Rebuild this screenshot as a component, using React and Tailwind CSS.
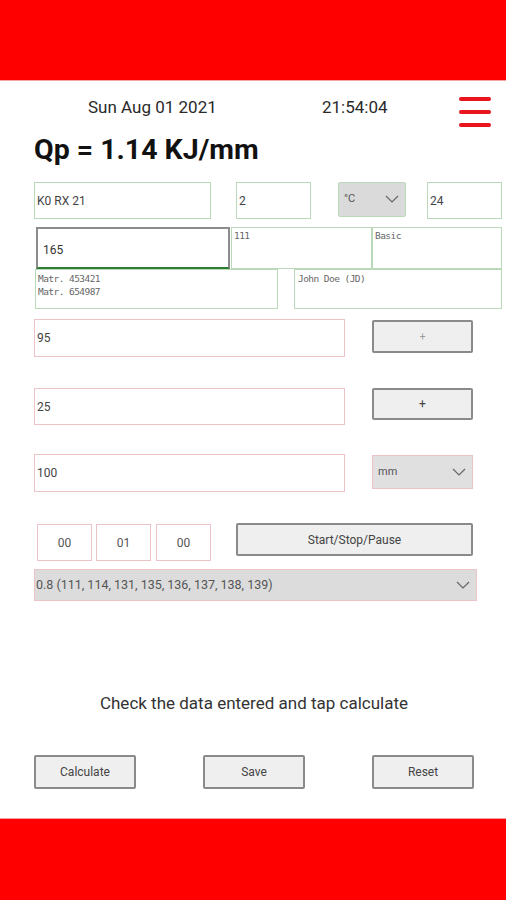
import React from "react";

const Chevron = ({ className = "" }) => (
  <svg width="14" height="8" viewBox="0 0 14 8" className={className}>
    <path d="M1 1 L7 7 L13 1" fill="none" stroke="#666" strokeWidth="1.2" />
  </svg>
);

export default function App() {
  const sans = { fontFamily: "Roboto, 'Liberation Sans', sans-serif" };
  const mono = { fontFamily: "'DejaVu Sans Mono', 'Liberation Mono', monospace", letterSpacing: "-0.55px" };
  const greenBox = "border border-[#b9d9b9] bg-white";
  const pinkBox = "border border-[#ecc3c6] bg-white";
  const btn = "border-2 border-[#8a8a8a] bg-[#efefef] rounded-[2px] flex items-center justify-center text-[12px] text-[#444]";
  return (
    <div className="w-[506px] h-[900px] flex flex-col bg-white overflow-hidden" style={sans}>
      <div className="h-[80px] bg-[#ff0000] shrink-0" />
      <div className="h-[1px] bg-[#f5a3a3] shrink-0" />
      <div className="flex-1 flex flex-col">
        {/* date row */}
        <div className="flex items-start h-[54px]">
          <div className="ml-[88px] w-[234px] mt-[16px] text-[17px] leading-[20px] text-[#2a2a2a]">Sun Aug 01 2021</div>
          <div className="w-[137px] mt-[16px] text-[17px] leading-[20px] text-[#2a2a2a]">21:54:04</div>
          <div className="mt-[16px] flex flex-col gap-[9px]">
            <div className="h-[4px] w-[32px] bg-[#e8141e] rounded-full" />
            <div className="h-[4px] w-[32px] bg-[#e8141e] rounded-full" />
            <div className="h-[4px] w-[32px] bg-[#e8141e] rounded-full" />
          </div>
        </div>
        {/* title */}
        <div className="ml-[34px] text-[28.5px] leading-[30px] font-bold text-[#111]">Qp = 1.14 KJ/mm</div>
        {/* row1 */}
        <div className="flex items-start mt-[17px] h-[37px]">
          <div className={`ml-[34px] w-[177px] h-[37px] ${greenBox} flex items-center pl-[2px] text-[12px] text-[#444]`}>K0 RX 21</div>
          <div className={`ml-[25px] w-[75px] h-[37px] ${greenBox} flex items-center pl-[2px] text-[12px] text-[#444]`}>2</div>
          <div className="ml-[27px] w-[68px] h-[35px] border border-[#b9d9b9] bg-[#dadada] rounded-[2px] flex items-start justify-between pl-[5px] pr-[6px] pt-[8px] text-[11px] text-[#555]">
            <span>°C</span>
            <Chevron className="mt-[4px]" />
          </div>
          <div className={`ml-[21px] w-[75px] h-[37px] ${greenBox} flex items-center pl-[2px] text-[12px] text-[#444]`}>24</div>
        </div>
        {/* row2 */}
        <div className="flex items-start mt-[8px] h-[42px]">
          <div className="ml-[36px] w-[194px] h-[42px] border-2 border-[#8c8c8c] border-b-[#2e7d32] bg-white flex items-center pl-[5px] pt-[3px] text-[12px] text-[#333]">165</div>
          <div className={`ml-[1px] w-[141px] h-[42px] ${greenBox} pl-[2px] pt-[2px] text-[9.5px] leading-[12px] text-[#666]`} style={mono}>111</div>
          <div className={`w-[130px] h-[42px] ${greenBox} pl-[2px] pt-[2px] text-[9.5px] leading-[12px] text-[#666]`} style={mono}>Basic</div>
        </div>
        {/* row3 */}
        <div className="flex items-start h-[40px]">
          <div className={`ml-[35px] w-[243px] h-[40px] ${greenBox} pl-[2px] pt-[2px] text-[9.5px] leading-[13px] text-[#666]`} style={mono}>
            <div>Matr. 453421</div>
            <div>Matr. 654987</div>
          </div>
          <div className={`ml-[16px] w-[208px] h-[40px] ${greenBox} pl-[3px] pt-[3px] text-[9.5px] leading-[12px] text-[#666]`} style={mono}>John Doe (JD)</div>
        </div>
        {/* row 95 */}
        <div className="flex items-start mt-[10px] h-[38px]">
          <div className={`ml-[34px] w-[311px] h-[38px] ${pinkBox} flex items-center pl-[2px] text-[12px] text-[#444]`}>95</div>
          <div className={`ml-[27px] w-[101px] h-[33px] mt-[1px] ${btn}`}>
            <span className="text-[#999] text-[10px]">+</span>
          </div>
        </div>
        {/* row 25 */}
        <div className="flex items-start mt-[31px] h-[37px]">
          <div className={`ml-[34px] w-[311px] h-[37px] ${pinkBox} flex items-center pl-[2px] text-[12px] text-[#444]`}>25</div>
          <div className={`ml-[27px] w-[101px] h-[32px] ${btn}`}>+</div>
        </div>
        {/* row 100 */}
        <div className="flex items-start mt-[29px] h-[38px]">
          <div className={`ml-[34px] w-[311px] h-[38px] ${pinkBox} flex items-center pl-[2px] text-[12px] text-[#444]`}>100</div>
          <div className="ml-[27px] mt-[1px] w-[101px] h-[34px] border border-[#ecc3c6] bg-[#e0e0e0] flex items-center justify-between pl-[5px] pr-[6px] text-[11px] text-[#555]">
            <span>mm</span>
            <Chevron />
          </div>
        </div>
        {/* timer row */}
        <div className="flex items-start mt-[31px] h-[38px]">
          <div className={`ml-[37px] w-[55px] h-[37px] ${pinkBox} flex items-center justify-center text-[12px] text-[#555] mt-[1px]`}>00</div>
          <div className={`ml-[4px] w-[55px] h-[37px] ${pinkBox} flex items-center justify-center text-[12px] text-[#555] mt-[1px]`}>01</div>
          <div className={`ml-[5px] w-[55px] h-[37px] ${pinkBox} flex items-center justify-center text-[12px] text-[#555] mt-[1px]`}>00</div>
          <div className={`ml-[25px] w-[237px] h-[33px] ${btn} text-[12.5px]`}>Start/Stop/Pause</div>
        </div>
        {/* dropdown */}
        <div className="flex mt-[8px]">
          <div className="ml-[34px] w-[443px] h-[32px] border border-[#ecc3c6] bg-[#dcdcdc] flex items-center justify-between pl-[1px] pr-[6px] text-[12.5px] text-[#555]">
            <span>0.8 (111, 114, 131, 135, 136, 137, 138, 139)</span>
            <Chevron />
          </div>
        </div>
        {/* message */}
        <div className="mt-[92px] text-center text-[17px] leading-[20px] text-[#333] pl-[2px]">Check the data entered and tap calculate</div>
        {/* buttons */}
        <div className="flex items-start mt-[42px]">
          <div className={`ml-[34px] w-[102px] h-[34px] ${btn}`}>Calculate</div>
          <div className={`ml-[67px] w-[102px] h-[34px] ${btn}`}>Save</div>
          <div className={`ml-[67px] w-[102px] h-[34px] ${btn}`}>Reset</div>
        </div>
      </div>
      <div className="h-[1px] bg-[#f5a3a3] shrink-0" />
      <div className="h-[81px] bg-[#ff0000] shrink-0" />
    </div>
  );
}
